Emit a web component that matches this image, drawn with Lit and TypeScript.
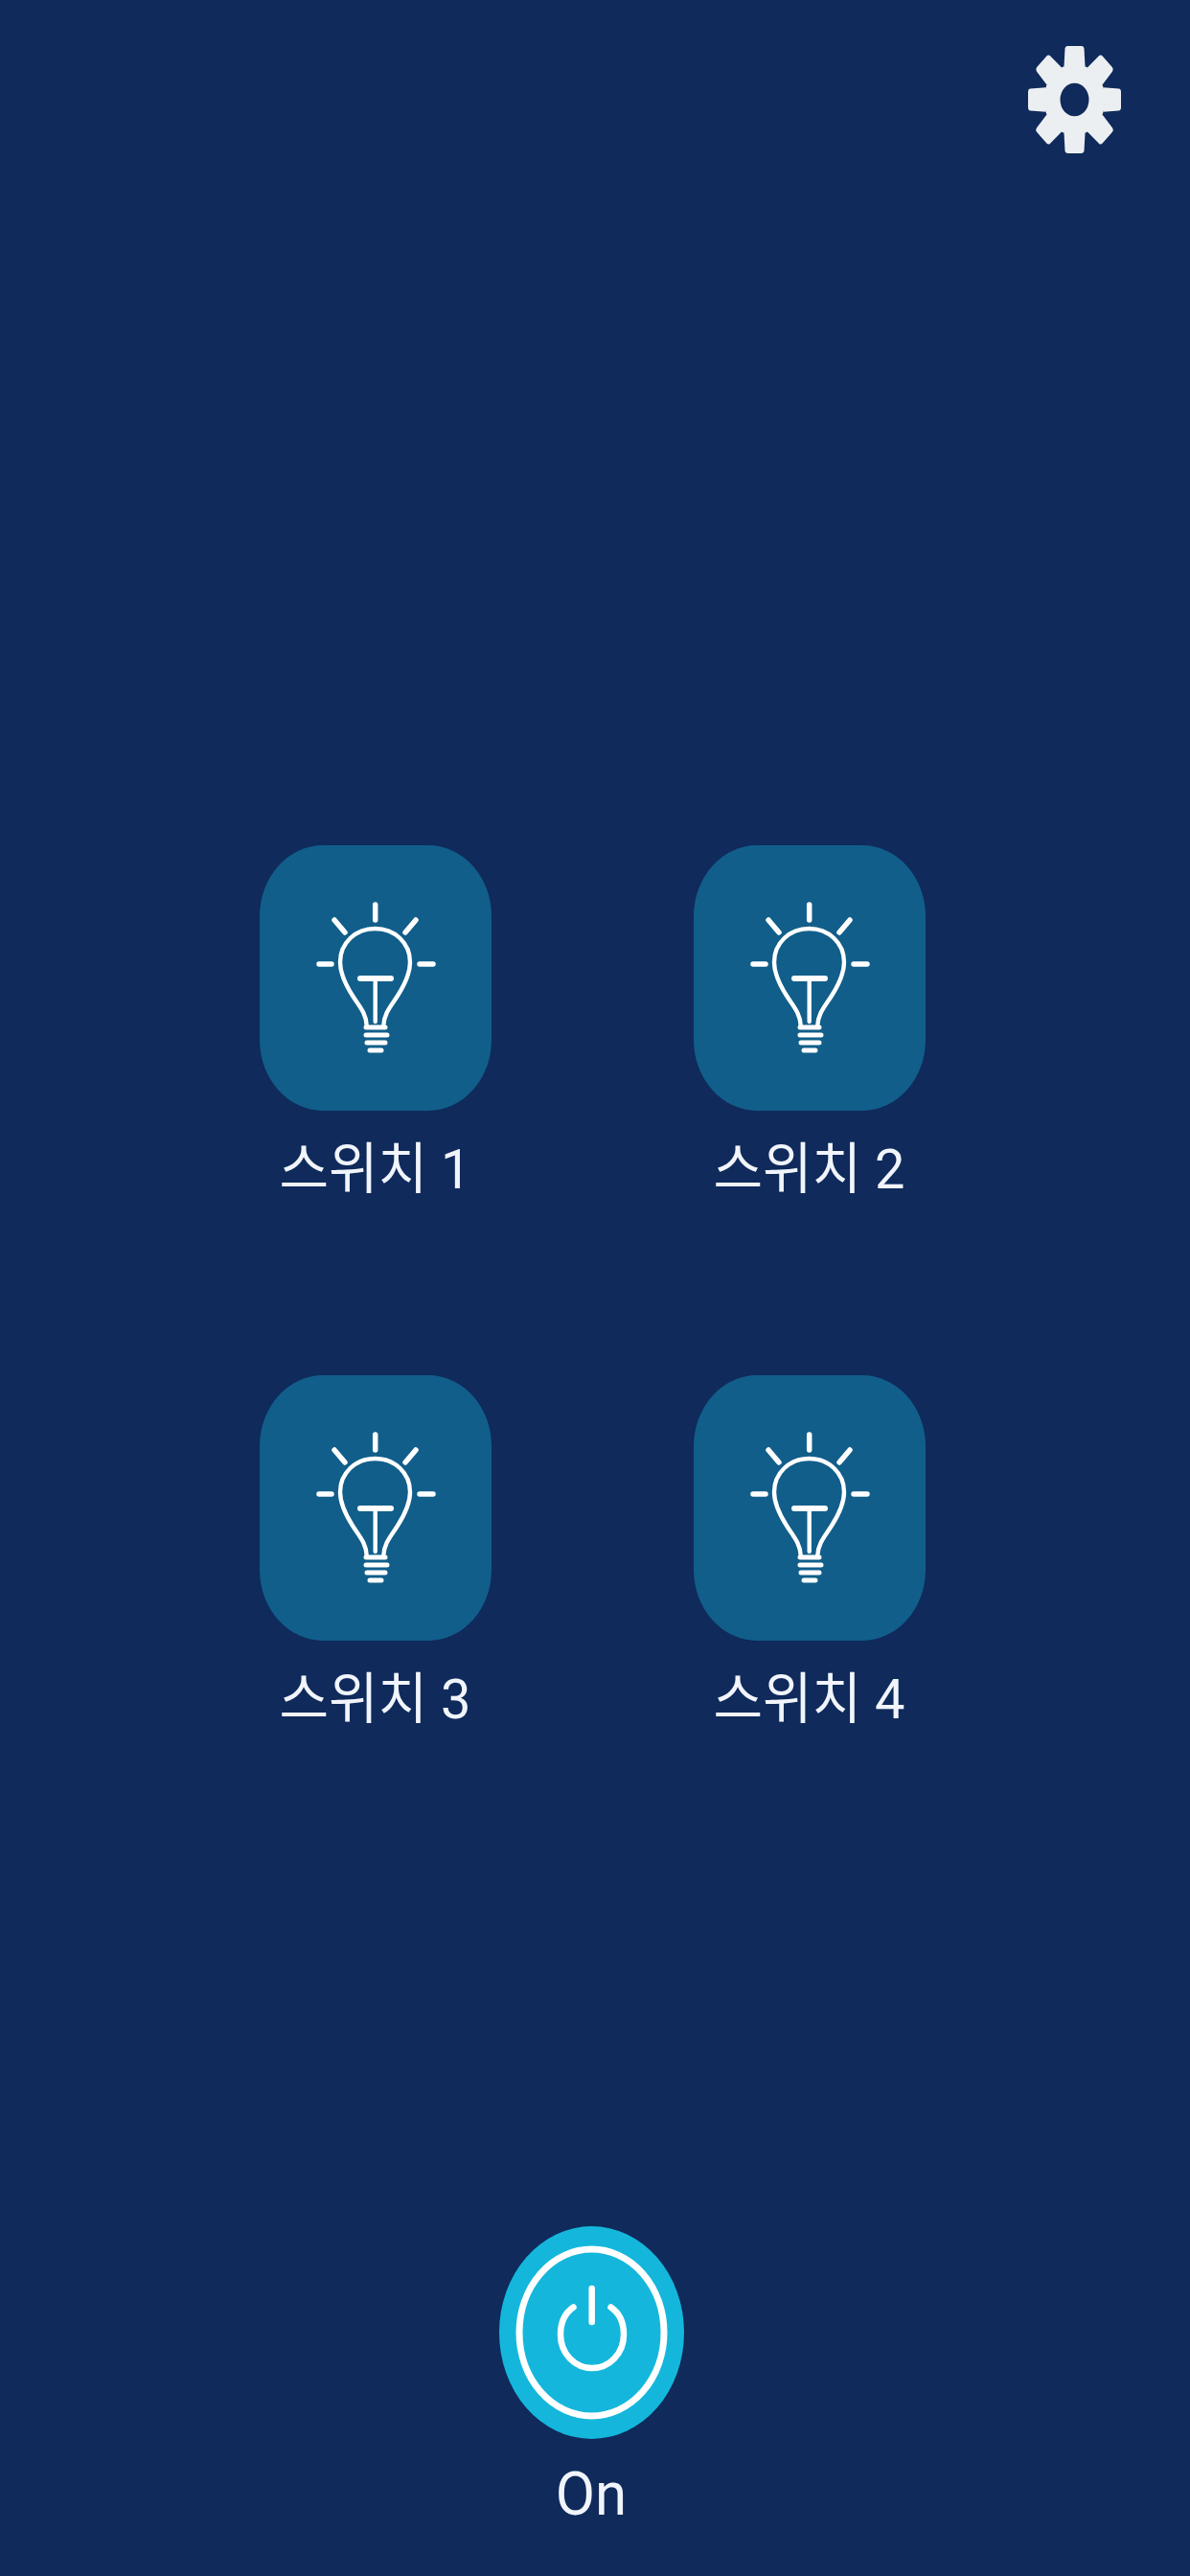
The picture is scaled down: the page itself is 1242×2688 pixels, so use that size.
import { LitElement, html, svg, css } from "lit";
import { customElement, property } from "lit/decorators.js";

const BULB = svg`
    <g fill="none" stroke="#fff" stroke-linecap="round">
        <path stroke-width="5.5" d="M120.7 62V78M78 78L89 91M163 78L152 91M62 124H75M167 124H181"/>
        <path stroke-width="6" d="M105 139H137"/>
        <path stroke-width="4.4" d="M111.7 188C111 175 104 168 97 157C90 146 84 134 84 122C84 102 100 87 120.5 87C141 87 157 102 157 122C157 134 151 146 144 157C137 168 130 175 129.3 188"/>
        <path stroke-width="4.4" d="M120.7 139V184"/>
        <path stroke-width="5" d="M111 190H131M111 198H133M112 206H131M115 214H127"/>
    </g>
`;

const TOOTH = "M-11 -30L-10 -46Q-9.8 -48.5 -7 -48.5H7Q9.8 -48.5 10 -46L11 -30Z";

@customElement("switch-tile")
export class SwitchTile extends LitElement
{
    static styles = css`
        :host {
            display: flex;
            flex-direction: column;
            align-items: center;
        }
        .tile {
            display: block;
            width: 242px;
            height: 277px;
            background-color: #115e8a;
            border-radius: 66px / 74px;
        }
        .label {
            margin-top: 24px;
            height: 75px;
            line-height: 75px;
            font-size: 56px;
            white-space: nowrap;
            color: #f1f5fb;
            transform: scaleY(1.03);
        }
    `;

    @property()
    label = "";

    render()
    {
        return html`
            <svg class="tile" viewBox="0 0 242 277">${BULB}</svg>
            <div class="label">${this.label}</div>
        `;
    }
}

@customElement("app-root")
export class AppRoot extends LitElement
{
    static styles = css`
        :host {
            display: flex;
            flex-direction: column;
            height: 2688px;
            overflow: hidden;
            background-color: #0f2a5b;
            font-family: Roboto, "Noto Sans CJK KR", sans-serif;
        }
        .top {
            display: flex;
            justify-content: flex-end;
            padding: 48px 72px 0 0;
        }
        .gear {
            display: block;
            width: 97px;
            height: 112px;
        }
        .switches {
            display: grid;
            grid-template-columns: 242px 242px;
            justify-content: center;
            column-gap: 211px;
            row-gap: 177px;
            margin-top: 722px;
            padding-right: 6px;
        }
        .power {
            display: flex;
            flex-direction: column;
            align-items: center;
            margin-top: 512px;
            padding-right: 8px;
        }
        .button {
            display: block;
            width: 193px;
            height: 222px;
        }
        .state {
            margin-top: 23px;
            height: 70px;
            line-height: 70px;
            font-size: 60px;
            color: #f1f5fb;
            transform: scaleY(1.06);
        }
    `;

    private switches = ["스위치 1", "스위치 2", "스위치 3", "스위치 4"];

    private renderGear()
    {
        const angles = [0, 45, 90, 135, 180, 225, 270, 315];
        return html`
            <svg class="gear" viewBox="0 0 97 112">
                <g transform="translate(48.5 56) scale(1 1.155)" fill="#eceff1">
                    <circle r="32"/>
                    ${angles.map((a) => svg`<path d=${TOOTH} transform="rotate(${a})"/>`)}
                    <circle r="15" fill="#0f2a5b"/>
                </g>
            </svg>
        `;
    }

    render()
    {
        return html`
            <div class="top">${this.renderGear()}</div>
            <div class="switches">
                ${this.switches.map((s) => html`<switch-tile label=${s}></switch-tile>`)}
            </div>
            <div class="power">
                <svg class="button" viewBox="0 0 193 222">
                    <ellipse cx="96.5" cy="111" rx="96.5" ry="111" fill="#14b7db"/>
                    <g fill="none" stroke="#fff" stroke-linecap="round">
                        <ellipse cx="96.5" cy="111" rx="75.5" ry="87" stroke-width="7"/>
                        <path stroke-width="6.5" d="M77.5 84.5C68 91 64 102 64 113C64 133 79 148 97 148C115 148 130 133 130 113C130 102 126 91 116.5 84.5"/>
                        <path stroke-width="6.5" d="M96.7 65V100"/>
                    </g>
                </svg>
                <div class="state">On</div>
            </div>
        `;
    }
}
